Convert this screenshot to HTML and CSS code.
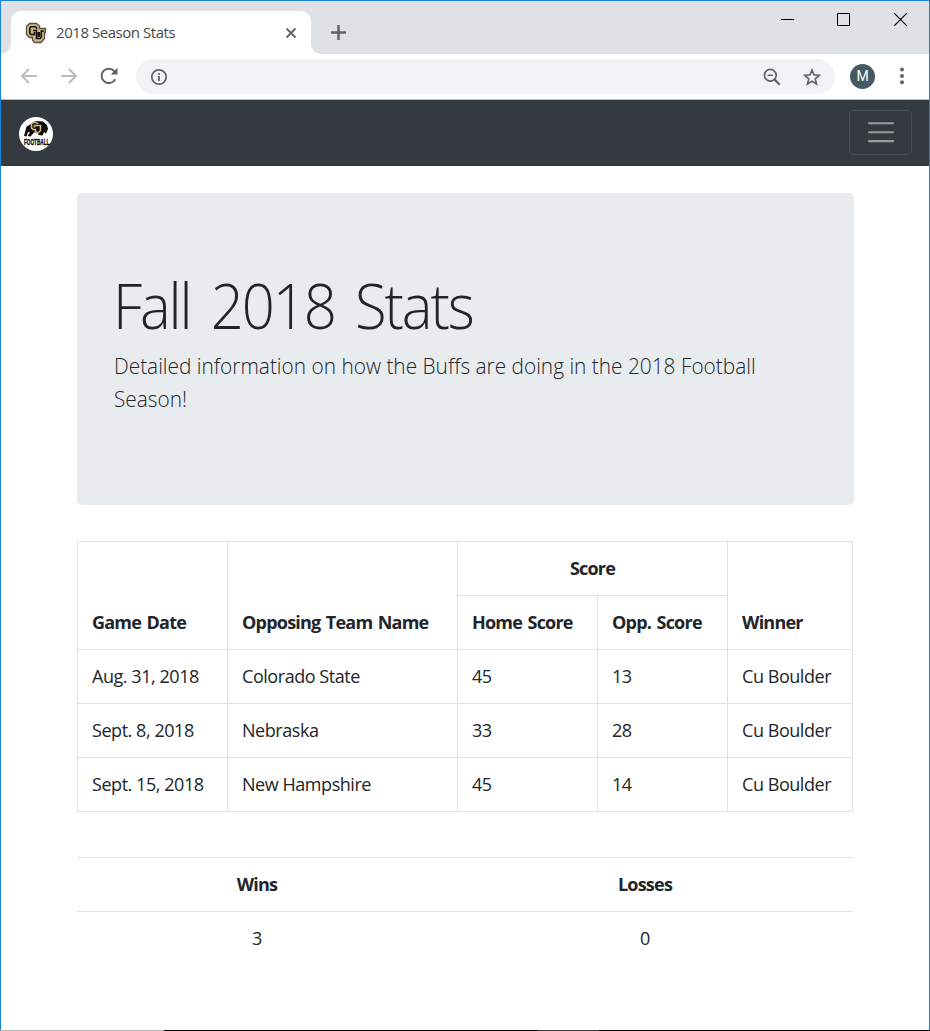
FILE: index.html
```html
<!DOCTYPE html>
<html lang="en">
<head>
<meta charset="utf-8">
<title>2018 Season Stats</title>
<link rel="stylesheet" href="styles.css">
</head>
<body>
<div class="window">
  <header class="tabstrip">
    <div class="strip-edge"></div>
    <div class="tab">
      <svg class="favicon" width="22" height="22" viewBox="0 0 22 22">
        <path d="M4.500 1.500H11.500L14.500 4V6.500H20.500V10.500H19.500V16.500L16 20.500H9.500L7.500 18V15.500H4.500L1.500 12.500V4.500Z" fill="#cfb87c" stroke="#554f43" stroke-width="1.300"/>
        <path d="M11.500 7V5.800L10.500 4.800H6L4.800 6V11.300L6 12.500H9.500V10" fill="none" stroke="#111" stroke-width="1.600"/>
        <path d="M8 8.500H11.500V16.500H15L16.300 15V9H19" fill="none" stroke="#111" stroke-width="1.600"/>
        <path d="M12.300 10H15.200V15H12.300Z" fill="#111"/>
      </svg>
      <span class="tab-title">2018 Season Stats</span>
      <svg class="tab-close" width="12" height="12" viewBox="0 0 12 12"><path d="M1.500 1.500 10.500 10.500M10.500 1.500 1.500 10.500" stroke="#5f6368" stroke-width="1.800"/></svg>
    </div>
    <div class="strip-rest">
      <svg class="new-tab" width="16" height="16" viewBox="0 0 16 16"><path d="M8.500 1V16M1 8.500H16" stroke="#5f6368" stroke-width="2.400"/></svg>
      <div class="window-buttons">
        <svg width="13" height="13" viewBox="0 0 13 13"><path d="M0 6.500H13" stroke="#000"/></svg>
        <svg width="13" height="13" viewBox="0 0 13 13"><path d="M.5.5H12.500V12.500H.5Z" fill="none" stroke="#000"/></svg>
        <svg width="13" height="13" viewBox="0 0 13 13"><path d="M.3.3 12.700 12.700M12.700.3.3 12.700" stroke="#000" stroke-width="1.100"/></svg>
      </div>
    </div>
  </header>
  <div class="toolbar">
    <svg class="back" width="18" height="16" viewBox="0 0 18 16"><path d="M17 8H2M9 1 2 8 9 15" fill="none" stroke="#b9bbbd" stroke-width="1.900"/></svg>
    <svg class="forward" width="18" height="16" viewBox="0 0 18 16"><path d="M1 8H16M9 1 16 8 9 15" fill="none" stroke="#b9bbbd" stroke-width="1.900"/></svg>
    <svg class="reload" width="18" height="18" viewBox="0 0 18 18"><path d="M15.200 12.200A7.200 7.200 0 1 1 14.400 4.300" fill="none" stroke="#5f6368" stroke-width="2"/><path d="M17.500.800V7.500H10.800Z" fill="#5f6368"/></svg>
    <div class="omnibox">
      <svg class="info" width="18" height="18" viewBox="0 0 18 18"><circle cx="9" cy="9" r="7.200" fill="none" stroke="#5f6368" stroke-width="1.700"/><path d="M9 8V13M9 5V6.800" stroke="#5f6368" stroke-width="1.800"/></svg>
      <svg class="zoom" width="18" height="18" viewBox="0 0 18 18"><circle cx="7.300" cy="7.300" r="5.900" fill="none" stroke="#5f6368" stroke-width="1.700"/><path d="M4.500 7.300H10.100" stroke="#5f6368" stroke-width="1.400"/><path d="M11.500 11.500 16.700 16.700" stroke="#5f6368" stroke-width="2.300"/></svg>
      <svg class="star" width="18" height="18" viewBox="0 0 18 18"><path d="M9 2 11 6.900 16.300 7.300 12.200 10.800 13.500 16 9 13.200 4.500 16 5.800 10.800 1.700 7.300 7 6.900Z" fill="none" stroke="#5f6368" stroke-width="1.600"/></svg>
    </div>
    <div class="avatar">M</div>
    <svg class="menu" width="4" height="18" viewBox="0 0 4 18"><g fill="#5f6368"><circle cx="2" cy="2.500" r="2"/><circle cx="2" cy="9" r="2"/><circle cx="2" cy="15.200" r="2"/></g></svg>
  </div>
  <nav class="navbar">
    <svg class="brand" width="34" height="34" viewBox="0 0 34 34">
      <circle cx="17" cy="17" r="17" fill="#fff"/>
      <path d="M5 19 6.500 13.500 7.500 9.500 10.500 8 13 6 17 4 24 4.500 28 8 29 12 27 16.500 25 15 23.500 18.500 19.500 18 19 16 15 15.500 11.500 19.500 8.500 19 11 15.500 9 15 7.500 19.500Z" fill="#080808"/>
      <path d="M19 7 17.500 5.500H14L12.500 7V11L14 12.500H16.500V15.500H19.500L21.500 13.500V8.500H15.500V10.500" fill="none" stroke="#cfb87c" stroke-width="1.700"/>
      <text class="brand-text" transform="translate(5 27.800) scale(.55 1)">FOOTBALL</text>
    </svg>
    <button class="toggler" aria-label="Toggle navigation">
      <svg width="28" height="22" viewBox="0 0 28 22"><path d="M2 2.300H26M2 11.200H26M2 20.100H26" stroke="#9a9c9f" stroke-width="2.100" stroke-linecap="round"/></svg>
    </button>
  </nav>
  <main class="container">
    <section class="jumbotron">
      <h1 class="display">Fall 2018 Stats</h1>
      <p class="lead">Detailed information on how the Buffs are doing in the 2018 Football<br>Season!</p>
    </section>
    <table class="games">
      <colgroup><col class="c-date"><col class="c-team"><col class="c-home"><col class="c-opp"><col class="c-win"></colgroup>
      <thead>
        <tr><th rowspan="2">Game Date</th><th rowspan="2">Opposing Team Name</th><th colspan="2" class="center">Score</th><th rowspan="2">Winner</th></tr>
        <tr><th>Home Score</th><th>Opp. Score</th></tr>
      </thead>
      <tbody>
        <tr><td>Aug. 31, 2018</td><td>Colorado State</td><td>45</td><td>13</td><td>Cu Boulder</td></tr>
        <tr><td>Sept. 8, 2018</td><td>Nebraska</td><td>33</td><td>28</td><td>Cu Boulder</td></tr>
        <tr><td>Sept. 15, 2018</td><td>New Hampshire</td><td>45</td><td>14</td><td>Cu Boulder</td></tr>
      </tbody>
    </table>
    <table class="totals">
      <colgroup><col class="c-wins"><col class="c-losses"></colgroup>
      <thead><tr><th>Wins</th><th>Losses</th></tr></thead>
      <tbody><tr><td>3</td><td>0</td></tr></tbody>
    </table>
  </main>
  <footer class="bottom-edge"></footer>
</div>
</body>
</html>
```
FILE: styles.css
```css
* { box-sizing: border-box; }
body { margin: 0; background: #fff; color: #212529; font-family: "Open Sans", "Noto Sans", sans-serif; overflow: hidden; }
svg { display: block; flex: none; }
.window { width: 930px; height: 1031px; border: 1px solid #1883d7; border-bottom: 0; display: flex; flex-direction: column; }
.tabstrip { height: 53px; display: flex; background: #fff; flex: none; }
.strip-edge { width: 10px; background: #dee1e6; border-bottom-right-radius: 10px; }
.tab { width: 300px; display: flex; align-items: center; padding: 0 14px; background: linear-gradient(#dee1e6 20px, #fff 20px); position: relative; z-index: 0; }
.tab::before { content: ""; position: absolute; z-index: -1; inset: 10px 0 0; border-radius: 10px 10px 0 0; background: #fff; }
.favicon { margin-top: 10px; }
.tab-title { margin: 8px 0 0 9px; font-size: 15px; letter-spacing: -.45px; color: #45494d; white-space: nowrap; }
.tab-close { margin: 10px 0 0 auto; }
.strip-rest { flex: 1; background: #dee1e6; border-bottom-left-radius: 10px; display: flex; justify-content: space-between; padding: 0 22px 0 19px; }
.new-tab { margin-top: 23px; }
.window-buttons { display: flex; gap: 43px; margin-top: 12px; }
.window-buttons svg:last-child { margin-left: 1px; }
.toolbar { height: 46px; flex: none; display: flex; align-items: center; border-bottom: 1px solid #b6b8ba; padding: 0 25px 1px 19px; }
.forward { margin-left: 22px; }
.reload { margin-left: 22px; }
.omnibox { width: 699px; height: 35px; margin-left: 18px; border-radius: 18px; background: #f1f3f4; display: flex; align-items: center; padding: 1px 14px 0; }
.zoom { margin-left: auto; }
.star { margin-left: 22px; }
.avatar { width: 25px; height: 25px; margin-left: 15px; border-radius: 50%; background: #455a64; color: #fff; font: 14px/25px Roboto, sans-serif; text-align: center; }
.menu { margin-left: auto; }
.navbar { height: 66px; flex: none; background: #343a40; display: flex; align-items: center; justify-content: space-between; padding: 0 17px 0 18px; }
.brand { margin-top: 2px; }
.brand-text { font: bold 8.500px "Liberation Sans", sans-serif; fill: #080808; stroke: #080808; stroke-width: .3px; }
.toggler { width: 63px; height: 45px; margin-bottom: 2px; padding: 0; border: 1px solid #484e53; border-radius: 5px; background: transparent; display: grid; place-items: center; }
.container { width: 777px; margin: 27px 0 0 76px; flex: 1; }
.jumbotron { height: 312px; background: #e9ecef; border-radius: 5px; padding: 74px 36px 0; }
.display, .lead { width: max-content; font-weight: 300; white-space: nowrap; transform-origin: left top; }
.display { margin: 0; font-size: 63px; line-height: 76px; letter-spacing: -2.300px; word-spacing: 8px; transform: scaleX(.92); }
.lead { margin: 6px 0 0 1px; font-size: 22.500px; line-height: 33px; transform: scaleX(.926); }
table { border-collapse: collapse; table-layout: fixed; width: 776px; font-size: 18px; line-height: 27px; letter-spacing: -.45px; }
tr { height: 54px; }
th, td { padding: 0 14px; text-align: left; white-space: nowrap; }
th { font-weight: 700; letter-spacing: -.78px; word-spacing: 1.500px; }
.games { margin-top: 36px; }
.games th, .games td { border: 1px solid #dee2e6; }
.games th { vertical-align: bottom; padding-bottom: 13px; }
.games .center { text-align: center; }
.c-date { width: 150px; }
.c-team { width: 230px; }
.c-home { width: 140px; }
.c-opp { width: 130px; }
.c-win { width: 125px; }
.totals { margin-top: 45px; }
.totals th, .totals td { border-top: 1px solid #dee2e6; text-align: center; }
.c-wins { width: 360px; }
.c-losses { width: 416px; }
.bottom-edge { height: 1px; margin: 0 -1px; flex: none; background: linear-gradient(90deg, #b8b8b8 164px, #080808 164px 538px, #3c3c3c 538px 599px, #080808 599px); }
```
